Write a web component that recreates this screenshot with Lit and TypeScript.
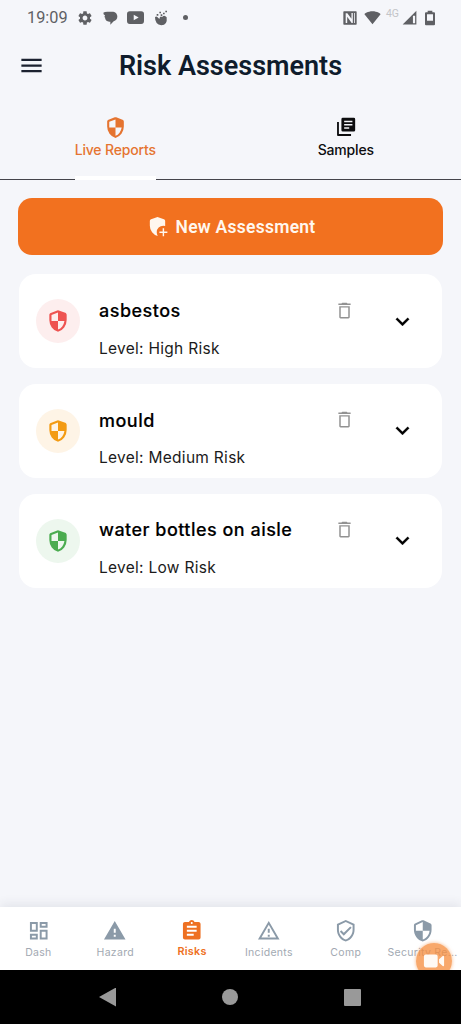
import { LitElement, html, css, svg } from "lit";
import { customElement, property } from "lit/decorators.js";

const ICONS: Record<string, string> = {
  gear: "M19.43 12.98c.04-.32.07-.64.07-.98s-.03-.66-.07-.98l2.11-1.65c.19-.15.24-.42.12-.64l-2-3.46c-.12-.22-.39-.3-.61-.22l-2.49 1c-.52-.4-1.08-.73-1.69-.98l-.38-2.65C14.46 2.18 14.25 2 14 2h-4c-.25 0-.46.18-.49.42l-.38 2.65c-.61.25-1.17.59-1.69.98l-2.49-1c-.23-.09-.49 0-.61.22l-2 3.46c-.13.22-.07.49.12.64l2.11 1.65c-.04.32-.07.65-.07.98s.03.66.07.98l-2.11 1.65c-.19.15-.24.42-.12.64l2 3.46c.12.22.39.3.61.22l2.49-1c.52.4 1.08.73 1.69.98l.38 2.65c.03.24.24.42.49.42h4c.25 0 .46-.18.49-.42l.38-2.65c.61-.25 1.17-.59 1.69-.98l2.49 1c.23.09.49 0 .61-.22l2-3.46c.12-.22.07-.49-.12-.64l-2.11-1.65zM12 15.600c-2 0-3.600-1.600-3.600-3.600s1.600-3.600 3.600-3.600 3.600 1.600 3.600 3.600-1.600 3.600-3.600 3.600z",
  chat: "M2 4Q4 2.500 8 2.500h7c5 0 8 3 8 7.300 0 3.700-2 6.200-5.500 7.200L12.500 22v-4.500H11C7 17.500 4.500 15 4.500 11H3.500l1-3Q2 7 2 4z",
  video: "M4 3h16q4 0 4 4v10q0 4-4 4H4q-4 0-4-4V7q0-4 4-4zm5.500 5v8l7-4z",
  hand: "M3 11Q4.500 9 6.500 10.500l3 3 1-3Q12 9 13.500 10.500l2-1.500Q18 8 20.500 11 22 23 12.500 23 3 22 3 11zM5.500 6h2.500v2.500H5.500zM9.500 2.500h2.500v2.500H9.500zM11.500 6.500h2.500v2.500h-2.500zM15 4h2.500v2.500H15zM18.500 1H21v2.500h-2.500z",
  nfc: "M3 2h18q1 0 1 1v18q0 1-1 1H3q-1 0-1-1V3q0-1 1-1zM5.500 5v14.500h2.300V10l6.700 9.500h1.700V4.500h-2V13L8 5zm12.500-.5v15h1.200v-15z",
  wifi: "M12.010 21.490L23.640 7c-.450-.340-4.930-4-11.640-4C5.280 3 .810 6.660.360 7l11.630 14.490.010.010.010-.010z",
  signal: "M1 23L23 1v22zM17.500 9v12H21V9z",
  battery: "M8.500 1h7v2.500H18q1.500 0 1.500 1.500v16.500q0 1.500-1.500 1.500H6q-1.500 0-1.500-1.500V5q0-1.500 1.500-1.500h2.500zM7.500 6.500V16h9V6.500z",
  menu: "M3 18h18v-2H3v2zm0-5h18v-2H3v2zm0-7v2h18V6H3z",
  shield: "M12 2.100q.35 0 .7.125l6 2.250q.575.225.938.725T20 6.375V11.100q0 3.800-2.262 6.900T12 22q-3.475-.875-5.738-3.988T4 11.100V6.375q0-.625.363-1.125t.937-.725l6-2.250q.35-.125.7-.125zM12 4.200L6 6.400V12h6zM12 12v7.900q2.300-.7 3.900-2.900T17.950 12z",
  security: "M11.190 1.360l-7 3.110C3.470 4.790 3 5.510 3 6.300V11c0 5.550 3.840 10.740 9 12 5.160-1.260 9-6.450 9-12V6.300c0-.79-.47-1.510-1.190-1.830l-7-3.110c-.51-.23-1.110-.23-1.620 0zM12 11.990h7c-.53 4.120-3.280 7.790-7 8.940V12H5V6.300l7-3.110v8.800z",
  library: "M3.250 6.500v14.250H17.500M8.500 2h12q1.500 0 1.500 1.500v12q0 1.500-1.500 1.500h-12Q7 17 7 15.500v-12Q7 2 8.500 2zM10 5.200v1.600h9V5.200zm0 3.500v1.600h9V8.700zm0 3.500v1.600h5.500v-1.600z",
  addShield: "M12 2.100q.35 0 .7.125l6 2.250q.575.225.938.725T20 6.375V11.500q-1-.4-2-.4-2.800 0-4.800 2T11.200 18q0 2 1 3.800-3.500-.7-5.850-3.800T4 11.100V6.375q0-.625.363-1.125t.937-.725l6-2.250q.35-.125.7-.125zM17.400 13.800h1.500v3.400h3.400v1.500h-3.400v3.400h-1.500v-3.400H14v-1.500h3.400z",
  trash: "M15.500 4l-1-1h-5l-1 1H5v1.700h14V4zM6 7v12.500c0 .9.600 1.500 1.500 1.500h9c.9 0 1.500-.6 1.500-1.500V7zm1.700 1.700h8.600v10.600h-8.600z",
  chevron: "M7.410 8.590L12 13.170l4.590-4.580L18 10l-6 6-6-6z",
  dash: "M19 5v2h-4V5h4M9 5v6H5V5h4m10 8v6h-4v-6h4M9 17v2H5v-2h4M21 3h-8v6h8V3zM11 3H3v10h8V3zm10 8h-8v10h8V11zm-10 4H3v6h8v-6z",
  hazard: "M1 21h22L12 2 1 21zm12-3h-2v-2h2v2zm0-4h-2v-4h2v4z",
  risks: "M19 3h-4.180C14.400 1.840 13.300 1 12 1c-1.300 0-2.400.84-2.820 2H5c-1.100 0-2 .9-2 2v14c0 1.100.9 2 2 2h14c1.100 0 2-.9 2-2V5c0-1.100-.9-2-2-2zm-7 0c.55 0 1 .45 1 1s-.45 1-1 1-1-.45-1-1 .45-1 1-1zm2 14H7v-2h7v2zm3-4H7v-2h10v2zm0-4H7V7h10v2z",
  incidents: "M12 5.990L19.530 19H4.470L12 5.990M12 2L1 21h22L12 2zm1 14h-2v2h2v-2zm0-6h-2v4h2v-4z",
  comp: "M12 1L3 5v6c0 5.550 3.840 10.740 9 12 5.160-1.260 9-6.450 9-12V5l-9-4zm7 10c0 4.520-2.980 8.690-7 9.930-4.020-1.240-7-5.410-7-9.930V6.300l7-3.110 7 3.110V11zm-11.590.590L6 13l4 4 8-8-1.410-1.420L10 14.170z",
  camera: "M3 5h11q2 0 2 2v10q0 2-2 2H3q-2 0-2-2V7q0-2 2-2zM17.500 10l4-3.500q1.500-.5 1.500 1v9q0 1.500-1.500 1l-4-3.500z",
};

@customElement("ui-icon")
class UiIcon extends LitElement {
  @property() name = "";
  static styles = css`
    :host { display: block; flex: none; width: 24px; height: 24px; }
    svg { display: block; width: 100%; height: 100%; fill: currentColor; overflow: visible; }
    .line { fill: none; stroke: currentColor; stroke-width: 2; }
  `;
  render() {
    const d = ICONS[this.name];
    if (this.name === "library") {
      const cut = d.indexOf("M8.500");
      return html`<svg viewBox="0 0 24 24">${svg`<path class="line" stroke-linejoin="round" d=${d.slice(0, cut)}></path><path fill-rule="evenodd" d=${d.slice(cut)}></path>`}</svg>`;
    }
    return html`<svg viewBox="0 0 24 24"><path fill-rule="evenodd" d=${d}></path></svg>`;
  }
}

@customElement("risk-card")
class RiskCard extends LitElement {
  @property() name = "";
  @property() level = "";
  static styles = css`
    :host { display: block; }
    .card { box-sizing: border-box; height: 94px; display: flex; background: #fff; border-radius: 17px; padding: 0 26px 0 17px; }
    .badge { width: 44px; height: 44px; margin-top: 25px; border-radius: 50%; display: flex; align-items: center; justify-content: center; }
    .badge ui-icon { width: 26px; height: 26px; }
    .high { color: #ee5351; background: #fdeeee; }
    .medium { color: #f39b13; background: #fef4e6; }
    .low { color: #4bac50; background: #edf7ee; }
    .text { flex: 1; margin-left: 19px; color: #000; white-space: nowrap; }
    .name { margin-top: 24.700px; font: 500 18px/24px Inter, sans-serif; letter-spacing: .48px; -webkit-text-stroke: .15px #000; }
    .level { margin-top: 15.700px; font: 400 15.500px/20px Inter, sans-serif; letter-spacing: .28px; color: #1b1b1b; }
    .trash { width: 21px; height: 21px; margin: 25.500px 34px 0 0; color: #929292; }
    .chevron { width: 27px; height: 27px; margin-top: 33.500px; color: #000; stroke: currentColor; stroke-width: .2px; }
  `;
  render() {
    return html`<div class="card">
      <div class="badge ${this.level.toLowerCase()}"><ui-icon name="shield"></ui-icon></div>
      <div class="text">
        <div class="name">${this.name}</div>
        <div class="level">Level: ${this.level} Risk</div>
      </div>
      <ui-icon class="trash" name="trash"></ui-icon>
      <ui-icon class="chevron" name="chevron"></ui-icon>
    </div>`;
  }
}

@customElement("app-root")
class AppRoot extends LitElement {
  static styles = css`
    :host { display: flex; flex-direction: column; height: 1024px; width: 100%; overflow: hidden; background: #f5f6fa; font-family: Inter, sans-serif; }
    .status { height: 35px; display: flex; align-items: center; padding: 0 23px 0 27px; color: #5f6064; }
    .status ui-icon { width: 16px; height: 16px; }
    .time { font: 400 16.300px/20px Roboto, sans-serif; width: 50px; }
    .notes { display: flex; align-items: center; gap: 9px; flex: 1; }
    .notes .wide { width: 17px; height: 17px; }
    .dot { width: 5px; height: 5px; border-radius: 50%; background: currentColor; margin-left: 5px; }
    .system { display: flex; align-items: center; }
    .system .wifi { width: 17px; height: 17px; margin-left: 6px; }
    .net { font: 400 10.500px/12px Roboto, sans-serif; color: #c3c4c8; margin: -7px 3px 0 5px; }
    .system .signal { width: 15px; height: 15px; }
    .system .battery { margin-left: 5px; }
    .header { height: 61px; display: grid; grid-template-columns: 62px 1fr 62px; align-items: center; }
    .header ui-icon { width: 27px; height: 27px; margin-left: 18px; color: #1c2230; }
    .title { margin: 0; text-align: center; font: 600 27px/34px Roboto, sans-serif; color: #0f1c2c; white-space: nowrap; }
    .tabs { height: 83px; display: grid; grid-template-columns: 1fr 1fr; border-bottom: 1.500px solid #44444a; margin-bottom: 18px; }
    .tab { height: 84px; display: flex; flex-direction: column; align-items: center; color: #0d0d0f; }
    .tab ui-icon { width: 25px; height: 25px; margin-top: 18.500px; margin-bottom: -.5px; }
    .tab .samples { width: 22px; height: 22px; margin: 20px 0 1px; }
    .label { font: 500 14px/18px Inter, sans-serif; letter-spacing: -.17px; margin-top: 2px; }
    .active { color: #e57430; }
    .bar { width: 81px; height: 4px; margin-top: auto; background: #fff; }
    .main { flex: 1; padding: 0 18px; }
    .new { box-sizing: border-box; width: 100%; height: 57px; border: 0; border-radius: 14px; padding: 0; background: #f2711f; color: #fff7ee; display: flex; align-items: center; justify-content: center; gap: 7px; font: 600 17.500px/22px Roboto, sans-serif; letter-spacing: .25px; }
    .new ui-icon { width: 23px; height: 23px; }
    .cards { display: flex; flex-direction: column; gap: 15.700px; margin: 19.300px 1px 0; }
    .nav { height: 63px; display: grid; grid-template-columns: repeat(6, 1fr); background: #fff; box-shadow: 0 -3px 10px rgba(40, 50, 80, .09); position: relative; }
    .item { min-width: 0; display: flex; flex-direction: column; align-items: center; color: #8b9aa8; }
    .item ui-icon { width: 23.500px; height: 23.500px; margin-top: 12px; }
    .item span { font: 400 10.500px/14px Inter, sans-serif; letter-spacing: .3px; color: #a2a9b2; margin-top: 3px; white-space: nowrap; }
    .item.current { color: #ee7022; }
    .item.current span { color: #ee7022; font-weight: 600; font-size: 10.800px; margin-top: 2px; }
    .recorder { position: absolute; right: 9px; top: 36px; width: 36px; height: 36px; border-radius: 50%; background: rgba(246, 140, 60, .76); box-shadow: 0 0 3px 1px rgba(247, 169, 109, .5); color: #fffaf4; display: flex; align-items: center; justify-content: center; }
    .recorder ui-icon { width: 22px; height: 22px; }
    .system-nav { height: 54px; display: flex; align-items: center; justify-content: center; gap: 106px; padding-right: 1px; background: #000; position: relative; z-index: 1; box-sizing: border-box; }
    .back { width: 17px; height: 19px; background: #999; clip-path: polygon(0 50%, 100% 0, 100% 100%); }
    .home { width: 16px; height: 16px; border-radius: 50%; background: #999; }
    .recent { width: 17px; height: 17px; border-radius: 1px; background: #999; }
  `;

  private cards = [
    { name: "asbestos", level: "High" },
    { name: "mould", level: "Medium" },
    { name: "water bottles on aisle", level: "Low" },
  ];

  private items = [
    { icon: "dash", text: "Dash" },
    { icon: "hazard", text: "Hazard" },
    { icon: "risks", text: "Risks" },
    { icon: "incidents", text: "Incidents" },
    { icon: "comp", text: "Comp" },
    { icon: "security", text: "Security Re..." },
  ];

  render() {
    return html`
      <div class="status">
        <span class="time">19:09</span>
        <div class="notes">
          <ui-icon name="gear"></ui-icon>
          <ui-icon name="chat"></ui-icon>
          <ui-icon class="wide" name="video"></ui-icon>
          <ui-icon name="hand"></ui-icon>
          <i class="dot"></i>
        </div>
        <div class="system">
          <ui-icon name="nfc"></ui-icon>
          <ui-icon class="wifi" name="wifi"></ui-icon>
          <span class="net">4G</span>
          <ui-icon class="signal" name="signal"></ui-icon>
          <ui-icon class="battery" name="battery"></ui-icon>
        </div>
      </div>
      <header class="header">
        <ui-icon name="menu"></ui-icon>
        <h1 class="title">Risk Assessments</h1>
      </header>
      <div class="tabs">
        <div class="tab active">
          <ui-icon name="shield"></ui-icon>
          <span class="label">Live Reports</span>
          <div class="bar"></div>
        </div>
        <div class="tab">
          <ui-icon class="samples" name="library"></ui-icon>
          <span class="label">Samples</span>
        </div>
      </div>
      <main class="main">
        <button class="new"><ui-icon name="addShield"></ui-icon>New Assessment</button>
        <div class="cards">
          ${this.cards.map((c) => html`<risk-card .name=${c.name} .level=${c.level}></risk-card>`)}
        </div>
      </main>
      <nav class="nav">
        ${this.items.map((i) => html`<div class="item ${i.icon === "risks" ? "current" : ""}">
          <ui-icon name=${i.icon}></ui-icon><span>${i.text}</span>
        </div>`)}
        <div class="recorder"><ui-icon name="camera"></ui-icon></div>
      </nav>
      <div class="system-nav">
        <i class="back"></i><i class="home"></i><i class="recent"></i>
      </div>
    `;
  }
}
